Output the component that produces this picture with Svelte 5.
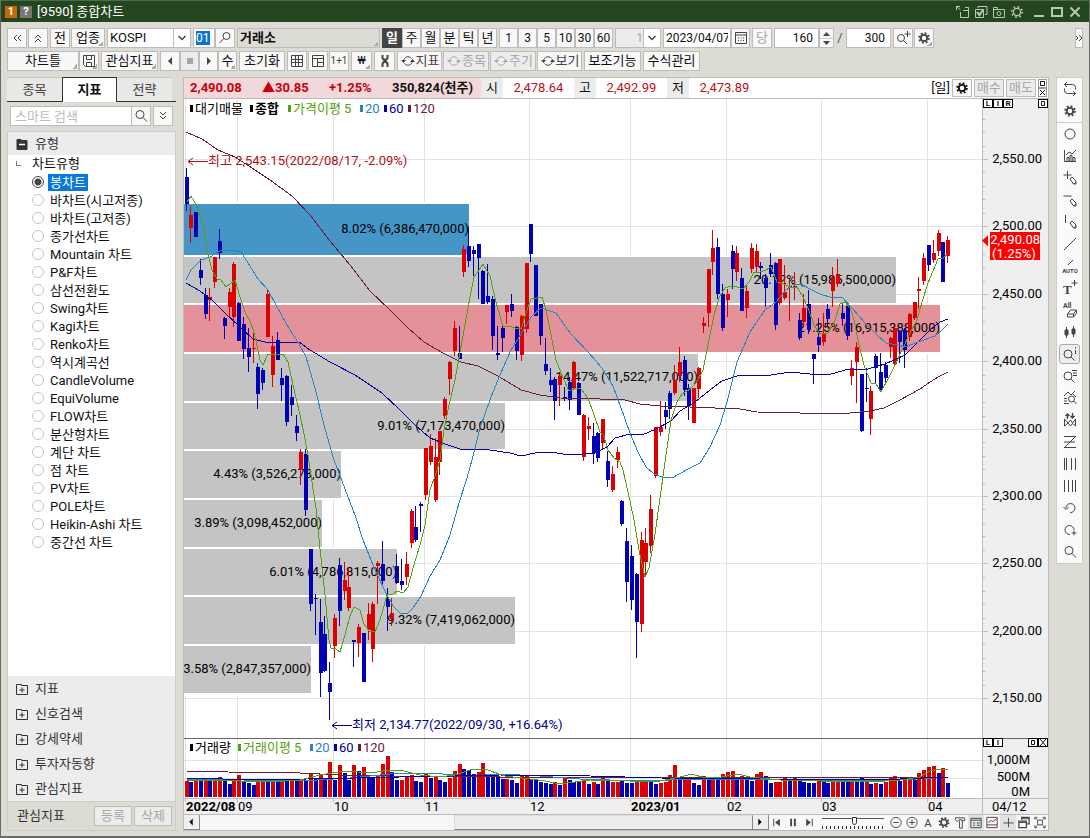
<script>
    const icons = {
        left2: '<path d="M8 5l-3 3 3 3M12 5l-3 3 3 3"/>',
        right2: '<path d="M4 5l3 3-3 3M8 5l3 3-3 3"/>',
        up2: '<path d="M5 8l3-3 3 3M5 12l3-3 3 3"/>',
        down2: '<path d="M5 4l3 3 3-3M5 8l3 3 3-3"/>',
        chevron: '<path d="M4.5 7l3.5 3.5L11.5 7" stroke-width="1.5"/>',
        search: '<circle cx="7" cy="6.5" r="4"/><path d="M10 9.5l4 4"/>',
        searchLeft: '<circle cx="9.5" cy="6" r="3.5"/><path d="M7 8.5L2.5 13"/>',
        searchPlus: '<circle cx="6" cy="8" r="3.5"/><path d="M8.5 10.5l3.5 3.5M12.5 1v6M9.5 4h6"/>',
        searchInfo: '<circle cx="6" cy="8" r="4"/><path d="M9 11l3.5 3.5M13.5 1v1.5M13.5 4v4"/>',
        searchList: '<circle cx="6" cy="8" r="4"/><path d="M9 11l3.5 3.5M10 2.5h5M11 5h4M11 7.5h4"/>',
        gear: '<circle cx="8" cy="8" r="3.2" stroke-width="1.8"/><circle cx="8" cy="8" r="4.9" stroke-width="1.8" stroke-dasharray="1.9 1.948"/>',
        gearThin: '<circle cx="8" cy="8" r="3.6" stroke-width="1.3"/><circle cx="8" cy="8" r="5.2" stroke-width="1.8" stroke-dasharray="1.6 2.484"/>',
        calendar: '<path d="M2.5 2.5h11v11h-11zM2.5 5h11"/><path d="M5 8h7M5 10.5h7" stroke-dasharray="1 1.5"/>',
        save: '<path d="M2.5 2.5h11v11h-9l-2-2zM5.5 2.5v4h5v-4M5.5 13.5v-4h5v4"/>',
        grid: '<path d="M2.5 2.5h11v11h-11zM2.5 6.5h11M2.5 9.5h11M6.5 2.5v11M9.5 2.5v11"/>',
        panes: '<path d="M2.5 2.5h11v11h-11zM2.5 5.5h11M7.5 5.5v8M7.5 9.5h6"/>',
        playLeft: '<path d="M10 4v8L6 8z" fill="currentColor" stroke="none"/>',
        playRight: '<path d="M6 4v8l4-4z" fill="currentColor" stroke="none"/>',
        stop: '<path d="M5 5h6v6H5z" fill="currentColor" stroke="none"/>',
        tools: '<path d="M5.5 2v3l5 5.5V14M10.5 2v3l-5 5.5V14" stroke-width="2"/>',
        cycle: '<path d="M3.5 8C4 3.5 9 2.5 11.500 5.5M12.5 8C12 12.500 7 13.5 4.5 10.5"/><path d="M1 7h5L3.5 10zM15 9h-5l2.5-3z" fill="currentColor" stroke="none"/>',
        repeat: '<path d="M5 1L2.5 3.5 5 6M2.5 3.5h8q3 0 3 3v2M11 15l2.5-2.5L11 10M13.5 12.5h-8q-3 0-3-3v-2"/>',
        circle: '<circle cx="8" cy="8" r="5"/>',
        chart: '<path d="M2.5 2v11.5H14M5 13V9.5h2V13M8 13V7.5h2V13M11 13V9.5h2V13M4 7l3-3 3 2 4-4"/>',
        pencilPlus: '<path d="M5.5 1v8M1.5 5h8M8 9l2-2 4 4v3h-2.5zM12 14l2-2"/>',
        pencilMinus: '<path d="M1.5 4h8M8 9l2-2 4 4v3h-2.5zM12 14l2-2"/>',
        pencilBar: '<path d="M3.5 1v8M8 9l2-2 4 4v3h-2.5zM12 14l2-2"/>',
        line: '<path d="M2 14L14 2"/>',
        auto: '<path d="M6 7l5-5"/><text x="8" y="15" font-size="6" font-weight="bold" text-anchor="middle" fill="currentColor" stroke="none">AUTO</text>',
        textPlus: '<text x="1" y="14" font-size="13" font-family="Liberation Serif, serif" font-weight="bold" fill="currentColor" stroke="none">T</text><path d="M12.5 0v6M9.5 3h6"/>',
        eraseAll: '<text x="1" y="6" font-size="7" font-weight="bold" fill="currentColor" stroke="none">All</text><path d="M5.5 12l3-4h6l-3 4zM5.5 12v3h6v-3M11.5 15l3-4V8"/>',
        candles: '<path d="M4.5 3v11M11.5 2v11"/><path d="M3 6h3v5H3zM10 5h3v5h-3z" fill="currentColor"/>',
        chartSearch: '<path d="M2 6l4-4 3 3 4-4M2 8.5h3M2 11h3M2 13.5h5"/><circle cx="9.5" cy="9" r="3"/><path d="M11.5 11l3 3M11 4l3 3"/>',
        arrows: '<path d="M5.5 7V2M3.5 4l2-2 2 2M10.5 1v5M8.5 4l2 2 2-2" stroke-width="1.4"/><path d="M2.5 14V7l3.5 4 2.5-3 2 3 3-4v7l-3-2.5-2 2.5-2.5-3z"/>',
        zed: '<path d="M2 2.5h12M2 8h11M2 13.5h12M13 3L3 13"/>',
        bars: '<path d="M2.5 2v12M4.5 2v12M9.5 2v12M13.5 2v12"/>',
        bars2: '<path d="M2.5 2v12M6.5 2v12M10.5 2v12M13.5 2v12"/>',
        undo: '<path d="M4 8a4.5 4.5 0 1 1 4 4.500M1.5 7L4 9.5 6.5 7"/>',
        redo: '<path d="M12 8a4.5 4.5 0 1 0-4 4.500M9.5 11h5M12 8.5v5"/>',
        first: '<path d="M4.5 4v8"/><path d="M11 4v8L6 8z" fill="currentColor" stroke="none"/>',
        pause: '<path d="M6 4v8M10 4v8" stroke-width="2"/>',
        last: '<path d="M11.5 4v8"/><path d="M5 4v8l5-4z" fill="currentColor" stroke="none"/>',
        minus: '<circle cx="8" cy="8" r="5.5"/><path d="M5 8h6"/>',
        plus: '<circle cx="8" cy="8" r="5.5"/><path d="M5 8h6M8 5v6"/>',
        letter: '<text x="8" y="13" font-size="12" text-anchor="middle" fill="currentColor" stroke="none">A</text>',
        hammer: '<path d="M3 3h10v3h-3v-1H7L5 7 3 5zM7.5 6v8h3V6"/>',
        form: '<path d="M2.5 3.5h11v10h-11zM2.5 5.5h11M5 8.5h2M5 11h2M9 8.5h3M9 11h3"/>',
        miniChart: '<path d="M2.5 2.5h11v11h-11zM2.5 10.5h11"/><path d="M4 8l3-2 2 1 4-3" stroke="#b02030"/>',
        cross: '<path d="M8.5 3v10M3 8.5h11"/>',
        windows: '<path d="M5.5 5V2.5h8v7H11M5.5 4h8M2.5 6.5h8v7h-8zM2.5 8h8" stroke-width="1.3"/>',
        expand: '<path d="M5.5 5.5h5v5h-5zM2.5 5V2.5H5M11 2.5h2.5V5M13.5 11v2.5H11M5 13.5H2.5V11M3 3l2 2M13 3l-2 2M3 13l2-2M13 13l-2-2"/>',
        popout: '<path d="M5.5 8v5.5h8v-10H10M8 6.5h5.5M1.5 2.5l4 3.5M1.5 6V2.5H5"/>',
        checks: '<path d="M5 4V2.5h9v8h-2M2.5 5.5h8v8h-8z"/><path d="M4 8l2.5 3L10 6" stroke-width="2"/>',
        camera: '<path d="M2.5 5.5v-2h4v2M2.5 5.5h11v8h-11z"/><circle cx="8" cy="9.5" r="2"/>',
        minimize: '<path d="M3 12h10" stroke-width="2"/>',
        maximize: '<path d="M3 4h10v8H3z" stroke-width="2"/>',
        close: '<path d="M3.5 3.5l9 9M12.5 3.5l-9 9" stroke-width="2"/>',
        folder: '<path d="M3 3.5h4l1 1h5v9H3z" fill="currentColor"/><path d="M5 8.5h6" stroke="#fff" stroke-width="1.5"/>',
        folderPlus: '<path d="M2.5 3.5h5v1h6v9h-11zM5.5 9h5M8 6.5v5"/>',
    }

    const titleTools = ["popout", "checks", "camera", "gearThin"]
    const periods = ["일", "주", "월", "분", "틱", "년"]
    const minutes = [1, 3, 5, 10, 30, 60]
    const types = [
        "봉차트", "바차트(시고저종)", "바차트(고저종)", "종가선차트", "Mountain 차트", "P&F차트", "삼선전환도",
        "Swing차트", "Kagi차트", "Renko차트", "역시계곡선", "CandleVolume", "EquiVolume", "FLOW차트",
        "분산형차트", "계단 차트", "점 차트", "PV차트", "POLE차트", "Heikin-Ashi 차트", "중간선 차트",
    ]
    const sections = ["지표", "신호검색", "강세약세", "투자자동향", "관심지표"]
    const drawTools = [
        "circle", "chart", "pencilPlus", "pencilMinus", "pencilBar", "line", "auto", "textPlus", "eraseAll", "candles",
        "searchInfo", "searchList", "chartSearch", "arrows", "zed", "bars", "bars2", "undo", "redo", "search",
    ]
    const footTools = ["minus", "plus", "letter", "gear", "hammer", "form", "miniChart", "cross", "windows", "expand"]

    let period = $state("일")
    let chartType = $state("봉차트")

    // volume profile: top, bottom, right edge, label, colour
    const bands = [
        [204, 255, 469, "8.02% (6,386,470,000)", "#4596c6"],
        [257, 303, 896, "20.12% (15,985,500,000)", "#c4c4c4"],
        [305, 352, 940, "21.25% (16,915,388,000)", "#e49199"],
        [354, 401, 698, "14.47% (11,522,717,000)", "#c4c4c4"],
        [403, 449, 505, "9.01% (7,173,470,000)", "#c4c4c4"],
        [451, 498, 341, "4.43% (3,526,273,000)", "#c4c4c4"],
        [500, 547, 322, "3.89% (3,098,452,000)", "#c4c4c4"],
        [549, 595, 397, "6.01% (4,786,815,000)", "#c4c4c4"],
        [597, 644, 515, "9.32% (7,419,062,000)", "#c4c4c4"],
        [646, 693, 311, "3.58% (2,847,357,000)", "#c4c4c4"],
    ]

    // colour, high, body top, body bottom, low
    const candles = `
        B168,177,204,211 R206,215,228,243 B212,212,237,237 B259,270,278,285 B288,295,314,319
        R288,297,300,321 R257,257,282,288 B229,241,253,259 B317,318,326,339 R288,292,307,317
        R262,264,317,327 B302,303,341,341 B317,324,349,359 B328,348,357,372 R333,348,349,363
        B363,367,394,409 B368,370,383,390 R289,294,337,337 R336,346,375,387 B332,340,360,360
        B368,378,385,401 B375,376,422,426 B385,397,405,416 B415,426,433,441 R449,452,470,485
        B449,454,510,516 B549,549,604,611 B594,598,599,635 B599,622,673,697 B616,634,671,672
        B662,683,692,720 R614,618,646,658 B558,565,611,626 R562,580,591,600 R569,587,608,611
        B640,640,642,667 R624,627,643,657 B633,633,682,682 R603,614,630,640 R602,604,649,662
        R561,563,566,604 B541,564,581,585 B588,599,607,631 R598,613,619,626 B554,566,583,584
        B559,581,585,590 R552,564,577,585 R509,511,543,548 B506,527,540,542 B502,504,506,532
        R448,448,495,500 R434,446,462,465 R438,457,500,502 R431,431,462,475 R397,399,416,419
        R361,362,379,395 R321,328,351,356 B326,353,359,359 R245,249,272,277 B227,246,261,267
        B246,250,254,276 B244,244,258,299 B270,271,304,304 B264,296,302,304 B296,299,336,350
        B326,353,355,360 B324,328,338,352 R305,305,312,324 B294,304,311,317 B326,327,351,360
        R315,316,355,361 R263,263,329,333 B224,224,254,262 B265,265,316,316 B304,304,336,345
        B338,364,371,375 B368,380,385,392 B377,379,401,420 R374,376,385,406 B387,397,399,401
        B377,382,400,410 R361,362,388,390 B382,383,415,415 R414,415,457,461 R417,426,429,440
        B423,436,453,464 B432,433,458,462 R419,419,443,449 B451,461,480,487 R466,474,490,492
        R447,452,460,468 B500,501,524,526 B528,541,582,602 B545,556,600,610 B573,574,622,658
        R532,540,624,632 R528,543,562,575 R495,509,546,553 R427,427,476,478 R401,427,432,436
        B402,410,417,429 B391,393,409,419 R365,380,393,395 R347,362,376,382 B356,360,390,396
        B384,388,406,420 R388,388,423,423 R367,368,389,398 R317,323,326,333 R269,269,313,327
        R230,248,262,275 B238,247,294,299 B284,294,328,331 R289,294,300,317 B245,251,269,289
        R246,253,272,281 B268,278,311,311 R285,291,308,318 R243,248,269,273 R244,251,267,272
        B262,266,268,279 B274,278,288,307 B253,265,274,277 B262,263,325,330 R259,259,303,305
        R265,292,298,300 R279,286,288,321 R272,286,287,300 B313,320,338,340 R294,308,322,325
        B290,304,330,334 B354,354,359,384 B318,337,345,352 R313,333,342,346 B304,309,319,326
        R267,277,291,307 R259,274,284,287 B304,313,319,326 B305,306,336,340 R360,368,376,385
        R342,347,362,403 B374,374,431,432 B368,388,389,402 R386,391,419,435 B354,356,368,384
        B353,372,390,392 B362,365,378,383 R337,338,347,358 R327,328,364,365 B330,331,342,363
        B328,330,350,368 R313,314,337,341 R302,302,318,320 R277,289,291,309 R253,258,281,285
        B245,245,265,271 R240,253,260,263 R230,233,251,256 B242,242,282,282 R236,240,256,263
    `.trim().split(/\s+/).map(t => [t[0], ...t.slice(1).split(",").map(Number)])

    // colour and height of each volume bar
    const volumes = `
        R16 B15 R18 B16 R17 B17 R17 R20 B18 B13 R17 R22 B15 B14 B12 R17 R17 B15 R18 B16 R17 B16
        R16 B16 R16 B16 R24 B18 R23 B19 R35 B17 R32 B24 B17 R32 B26 R30 B20 B19 R22 R33
        R41 B25 B17 R17 R20 R22 B16 B15 R24 B19 R20 B17 B15 R19 R26 R33 B28 B27 B23 R25
        R34 B22 B21 B20 B18 R18 B17 B14 R21 R22 B18 B18 B15 B14 B13 R15 B12 R19 B17 B15
        B15 R17 B13 R15 B13 R21 B16 R15 R15 B16 B14 B14 R15 R15 R17 B15 B13 R14 R15 R22
        R32 B20 R20 R20 B14 B12
        R21 B17 R17 B17 R23 R25 R26 B20 R21 B17 B16 R23 R25 B21 B14 R15 R15 R20 B17 R19
        B16 B15 B14 B14 R17 B17 B14 R16 R17 B17 B16 R17 B15 B19 R16 B13 R14 B13 R15 R20
        R21 B16 R18 R20 B17 R24 R27 R30 R31 B24 R29 B14
    `.trim().split(/\s+/).map(t => [t[0], Number(t.slice(1))])

    const averages = [
        ["#6b1a42", "186,132 202,139 218,150 235,157 252,168 270,180 292,196 310,215 330,241 350,265 370,291 390,310 408,328 424,342 443,353 461,362 478,366 498,376 521,390 540,395 560,398 600,399 625,400 640,404 660,406 690,407 715,408 740,409 757,412 800,413 820,414 850,413 870,411 884,408 900,400 920,389 930,382 940,376 948,372"],
        ["#0000a0", "186,283 200,291 213,301 225,313 240,327 253,339 265,342 299,342 310,350 330,362 355,375 382,393 400,410 415,425 430,438 445,444 460,449 490,450 510,453 521,456 535,453 550,452 570,455 595,453 607,447 615,438 630,434 642,435 656,429 671,421 680,411 695,402 710,390 722,381 740,375 765,376 790,372 810,374 828,375 845,370 868,369 885,364 905,355 915,345 930,330 940,322 948,319"],
        ["#2585c4", "186,280 191,270 201,260 210,257 220,251 232,250 241,252 250,266 258,279 268,290 277,307 290,330 299,344 306,357 315,388 324,425 334,460 345,489 355,515 363,540 375,570 387,595 393,606 400,613 407,614 413,608 421,596 430,576 440,560 450,535 459,503 467,478 472,460 480,428 491,397 500,375 511,350 521,334 531,317 541,308 556,313 570,333 589,353 602,368 613,386 621,408 630,433 638,452 646,467 654,474 662,477 672,478 690,468 700,463 710,447 720,425 727,402 737,362 750,332 765,310 776,302 784,292 792,285 801,284 810,289 820,294 833,298 842,297 852,308 865,323 877,335 886,343 898,345 905,347 918,342 935,336 942,330 948,324"],
        ["#55a010", "187,202 191,196 197,206 203,225 207,250 212,270 217,279 221,280 226,287 235,280 240,297 245,312 250,321 254,332 260,360 263,365 268,354 283,354 288,362 293,385 300,415 304,434 308,455 312,482 316,508 320,549 325,595 329,640 331,648 336,649 340,652 345,635 350,616 354,607 360,610 364,624 369,631 375,632 380,620 387,595 393,594 397,591 403,593 408,587 413,568 420,545 425,525 430,490 436,473 440,460 444,430 449,405 455,380 460,352 465,325 470,297 474,277 479,270 483,264 490,276 496,302 503,326 509,326 515,328 521,329 527,310 531,299 537,298 542,297 546,310 551,335 556,360 563,378 569,391 575,388 581,389 588,398 594,415 600,432 604,436 608,450 614,458 620,462 623,470 628,492 634,520 639,550 645,577 649,568 655,534 660,498 666,455 671,420 677,402 682,394 690,389 696,383 703,370 709,340 714,315 719,298 725,288 731,286 737,287 743,289 749,282 754,272 760,272 766,270 771,267 777,282 784,284 790,287 797,287 802,295 808,308 814,325 820,334 828,333 835,320 840,304 845,302 850,308 854,320 859,345 864,365 871,383 876,384 881,392 889,377 896,363 903,348 910,333 917,320 922,302 928,283 933,271 938,259 943,258 947,255"],
    ]
    const volumeAverages = [
        ["#6b1a42", "186,771 228,772 300,773 340,775 390,776 500,777 700,778 948,777"],
        ["#2585c4", "186,779 300,781 350,778 400,773 430,773 470,776 500,774 540,776 580,779 640,781 700,779 800,780 900,780 948,777"],
        ["#0000a0", "186,778 260,780 400,777 500,775 590,776 660,778 770,779 900,779 948,777"],
        ["#55a010", "186,780 240,781 270,782 300,780 320,775 345,771 370,773 390,770 400,770 420,775 440,777 455,775 470,770 485,769 505,776 530,779 545,781 560,784 590,780 630,781 660,781 680,777 692,774 705,778 722,777 738,774 750,777 780,780 820,781 870,782 900,780 920,777 930,771 940,769 948,769"],
    ]

    const months = [
        [185, "2022/08", true], [237, "09"], [333, "10"], [424, "11"], [529, "12"],
        [630, "2023/01", true], [726, "02"], [821, "03"], [927, "04"],
    ]
    const prices = [
        [159, "2,550.00"], [226, "2,500.00"], [294, "2,450.00"], [361, "2,400.00"], [429, "2,350.00"],
        [496, "2,300.00"], [563, "2,250.00"], [631, "2,200.00"], [698, "2,150.00"],
    ]
    const priceLegend = [
        [190, "대기매물", "#000"], [250, "종합", "#000", true], [288, "가격이평 5", "#55a010"],
        [360, "20", "#2585c4"], [384, "60", "#0000a0"], [408, "120", "#6b1a42"],
    ]
    const volumeLegend = [
        [190, "거래량", "#000"], [238, "거래이평 5", "#55a010"],
        [310, "20", "#2585c4"], [334, "60", "#0000a0"], [358, "120", "#6b1a42"],
    ]

    const fill = c => c === "R" ? "#dc0000" : "#0000b4"
    const x = i => Math.round(184.5 + i * 4.79)
</script>

{#snippet icon(name)}
    <svg class="icon" viewBox="0 0 16 16" aria-hidden="true">{@html icons[name]}</svg>
{/snippet}

{#snippet legend(items, y)}
    {#each items as [lx, label, color, bold]}
        <rect x={lx} y={y - 8} width="3" height="7" fill={color} />
        <text x={lx + 5} {y} fill={color} class:bold>{label}</text>
    {/each}
{/snippet}

<div class="window">
    <header class="title">
        <span class="badge">1</span>
        <span class="badge help">?</span>
        <h1>[9590] 종합차트</h1>
        <div class="title-tools">
            {#each titleTools as name}
                <button aria-label={name}>{@render icon(name)}</button>
            {/each}
        </div>
        <div class="title-tools controls">
            {#each ["minimize", "maximize", "close"] as name}
                <button aria-label={name}>{@render icon(name)}</button>
            {/each}
        </div>
    </header>

    <div class="toolbars">
        <div class="toolbar">
            <div class="pair">
                <button class="btn w20" aria-label="이전">{@render icon("left2")}</button>
                <button class="btn w20" aria-label="접기">{@render icon("up2")}</button>
            </div>
            <div class="pair">
                <button class="btn w20">전</button>
                <button class="btn w34 corner">업종</button>
            </div>
            <div class="select w84">
                <select aria-label="업종"><option>KOSPI</option></select>
                <span class="arrow">{@render icon("chevron")}</span>
            </div>
            <div class="seg">
                <input class="field code w22" aria-label="코드" value="01">
                <button class="btn w20" aria-label="찾기">{@render icon("searchLeft")}</button>
            </div>
            <div class="name corner">거래소</div>
            <div class="seg">
                {#each periods as p}
                    <button class="btn w19 period" class:active={period === p} onclick={() => period = p}>{p}</button>
                {/each}
            </div>
            <div class="seg">
                {#each minutes as m}
                    <button class="btn w19 minute">{m}</button>
                {/each}
            </div>
            <div class="select w46 off">
                <select aria-label="분"><option>1</option></select>
                <span class="arrow">{@render icon("chevron")}</span>
            </div>
            <div class="seg">
                <input class="field w68" aria-label="날짜" value="2023/04/07">
                <button class="btn w19" aria-label="달력">{@render icon("calendar")}</button>
            </div>
            <button class="btn w20 muted">당</button>
            <div class="seg">
                <input class="field num w45" aria-label="표시 개수" value="160">
                <div class="spin">
                    <button aria-label="증가"><svg viewBox="0 0 7 4"><path d="M0 4l3.5-4L7 4z" /></svg></button>
                    <button aria-label="감소"><svg viewBox="0 0 7 4"><path d="M0 0l3.5 4L7 0z" /></svg></button>
                </div>
            </div>
            <span class="slash">/</span>
            <input class="field num w45" aria-label="전체 개수" value="300">
            <div class="pair">
                <button class="btn w20" aria-label="확대">{@render icon("searchPlus")}</button>
                <button class="btn w20 corner" aria-label="설정">{@render icon("gear")}</button>
            </div>
            <button class="btn more" aria-label="더보기">{@render icon("right2")}</button>
        </div>

        <div class="toolbar">
            <div class="seg">
                <button class="btn w72 corner">차트틀</button>
                <button class="btn w20 corner" aria-label="저장">{@render icon("save")}</button>
            </div>
            <button class="btn w57 corner">관심지표</button>
            <div class="seg">
                <button class="btn w20" aria-label="뒤로">{@render icon("playLeft")}</button>
                <button class="btn w19 muted shade" aria-label="정지">{@render icon("stop")}</button>
                <button class="btn w19" aria-label="앞으로">{@render icon("playRight")}</button>
                <button class="btn w19 corner">수</button>
            </div>
            <button class="btn w46">초기화</button>
            <div class="pair">
                <button class="btn w20" aria-label="격자">{@render icon("grid")}</button>
                <button class="btn w20" aria-label="분할">{@render icon("panes")}</button>
                <button class="btn w20 tiny">1+1</button>
            </div>
            <button class="btn w21 corner won">₩</button>
            <button class="btn w21" aria-label="도구">{@render icon("tools")}</button>
            <div class="pair">
                <button class="btn w45 soft">{@render icon("cycle")}지표</button>
                <button class="btn w46 muted shade">{@render icon("cycle")}종목</button>
                <button class="btn w46 muted shade">{@render icon("cycle")}주기</button>
                <button class="btn w45 soft">{@render icon("cycle")}보기</button>
            </div>
            <button class="btn w57">보조기능</button>
            <button class="btn w57">수식관리</button>
        </div>
    </div>

    <main class="body">
        <aside class="sidebar">
            <nav class="tabs">
                <button>종목</button>
                <button class="current">지표</button>
                <button>전략</button>
            </nav>
            <div class="search">
                <input class="field" aria-label="스마트 검색" placeholder="스마트 검색">
                <button class="btn w20" aria-label="검색">{@render icon("search")}</button>
                <button class="btn w20 apart" aria-label="펼치기">{@render icon("down2")}</button>
            </div>
            <h2 class="section top">{@render icon("folder")}유형</h2>
            <fieldset class="types">
                <legend>차트유형</legend>
                {#each types as type}
                    <label class="type">
                        <input type="radio" name="type" value={type} bind:group={chartType}>
                        <span>{type}</span>
                    </label>
                {/each}
            </fieldset>
            {#each sections as section}
                <button class="section">{@render icon("folderPlus")}{section}</button>
            {/each}
            <div class="saved">
                <span>관심지표</span>
                <button class="btn muted shade">등록</button>
                <button class="btn muted shade">삭제</button>
            </div>
        </aside>

        <section class="main">
            <div class="quote">
                <div class="change">
                    <b>2,490.08</b><b>▲30.85</b><b>+1.25%</b><b class="amount">350,824(천주)</b>
                </div>
                <span class="key">시</span><span class="val">2,478.64</span>
                <span class="key">고</span><span class="val">2,492.99</span>
                <span class="key">저</span><span class="val">2,473.89</span>
                <span class="unit">[일]</span>
                <button class="btn w20" aria-label="설정">{@render icon("gear")}</button>
                <button class="btn w30 muted shade">매수</button>
                <button class="btn w30 muted shade">매도</button>
                <div class="mini">
                    <button aria-label="복원"><svg viewBox="0 0 7 7"><path d="M1.5 1.5h4v4h-4z" /></svg></button>
                    <button aria-label="닫기"><svg viewBox="0 0 7 7"><path d="M1 1l5 5M6 1L1 6" /></svg></button>
                </div>
            </div>

            <div class="pane">
                <svg class="plot" viewBox="184 99 864 639">
                    <rect x="184" y="99" width="799" height="639" fill="#fff" />
                    <g class="crisp">
                        {#each months as [mx]}
                            <path d="M{mx}.5 99V738" stroke="#e2e2e2" />
                        {/each}
                        {#each prices as [py]}
                            <path d="M184 {py}.5H983" stroke="#e2e2e2" />
                        {/each}
                        {#each bands as [top, bottom, right, , color]}
                            <rect x="184" y={top - 2} width={right - 184} height={bottom - top + 4} fill="#fff" />
                            <rect x="184" y={top} width={right - 184} height={bottom - top} fill={color} />
                        {/each}
                    </g>
                    {#each bands as [top, bottom, right, label]}
                        <text x={right} y={Math.floor((top + bottom) / 2) + 4} text-anchor="end">{label}</text>
                    {/each}
                    <g class="crisp">
                        {#each candles as [c, high, top, bottom, low], i}
                            <rect x={x(i) + 1} y={high} width="1" height={low - high} fill={fill(c)} />
                            <rect x={x(i)} y={top} width="4" height={Math.max(bottom - top, 1)} fill={fill(c)} />
                        {/each}
                        {#each averages as [color, points]}
                            <polyline {points} stroke={color} fill="none" />
                        {/each}
                    </g>
                    <path d="M208 161.5H188M193 158l-5 3.5 5 3.5" stroke="#b01020" fill="none" />
                    <text x="208" y="165" fill="#b01020">최고 2,543.15(2022/08/17, -2.09%)</text>
                    <path d="M352 725.5H332M337 722l-5 3.5 5 3.5" stroke="#00008c" fill="none" />
                    <text x="352" y="729" fill="#00008c">최저 2,134.77(2022/09/30, +16.64%)</text>
                    {@render legend(priceLegend, 113)}

                    <rect x="983" y="99" width="65" height="639" fill="#efefef" />
                    <g class="crisp">
                        <path d="M982.5 99V738" stroke="#bbb" />
                        {#each prices as [py]}
                            <path d="M983 {py}.5h5M983 {py - 54}.5h2M983 {py - 40}.5h2M983 {py - 27}.5h2M983 {py - 13}.5h2" stroke="#bbb" />
                        {/each}
                    </g>
                    {#each prices as [py, label]}
                        <text x="1042" y={py + 4} text-anchor="end">{label}</text>
                    {/each}
                    <path d="M982 240.5l6-5v11z" fill="#f00" />
                    <rect x="990" y="232" width="50" height="28" fill="#f00" />
                    <text x="1040" y="244" text-anchor="end" fill="#fff">2,490.08</text>
                    <text x="992" y="258" fill="#fff">(1.25%)</text>
                </svg>
                <div class="marks">
                    <button>L</button><button>I</button><button>R</button>
                    <button class="end" aria-label="최대화"><svg viewBox="0 0 8 7"><path d="M2.5 1.5h3v4h-3z" /></svg></button>
                </div>
            </div>

            <div class="pane">
                <svg class="plot" viewBox="184 738 864 60">
                    <rect x="184" y="738" width="799" height="60" fill="#fff" />
                    <rect x="983" y="738" width="65" height="60" fill="#efefef" />
                    <g class="crisp">
                        {#each months as [mx]}
                            <path d="M{mx}.5 738V798" stroke="#e2e2e2" />
                        {/each}
                        <path d="M184 760.5H987M184 778.5H987" stroke="#e2e2e2" />
                        <path d="M982.5 738V798" stroke="#bbb" />
                        <path d="M184 738.5H1048" stroke="#666" />
                        {#each volumes as [c, h], i}
                            <rect x={x(i)} y={797 - h} width="4" height={h} fill={fill(c)} />
                        {/each}
                        {#each volumeAverages as [color, points]}
                            <polyline {points} stroke={color} fill="none" />
                        {/each}
                    </g>
                    {@render legend(volumeLegend, 752)}
                    <text x="1030" y="764" text-anchor="end">1,000M</text>
                    <text x="1030" y="781" text-anchor="end">500M</text>
                    <text x="1030" y="796" text-anchor="end">0M</text>
                </svg>
                <div class="marks">
                    <button>L</button><button>I</button>
                    <button class="end" aria-label="최대화"><svg viewBox="0 0 8 7"><path d="M2.5 1.5h3v4h-3z" /></svg></button>
                    <button aria-label="닫기"><svg viewBox="0 0 8 7"><path d="M1 0l6 7M7 0L1 7" /></svg></button>
                </div>
            </div>

            <svg class="plot dates" viewBox="184 798 864 17">
                <path d="M184 798.5H1048M184 814.5H1048M982.5 798V815" stroke="#bbb" />
                {#each months as [mx, label, bold]}
                    <path d="M{mx}.5 798v4" stroke="#bbb" />
                    <text x={mx + 1} y="811" class:bold>{label}</text>
                {/each}
                <text x="992" y="811">04/12</text>
            </svg>

            <div class="foot">
                <div class="scroll">
                    <button aria-label="왼쪽">{@render icon("playLeft")}</button>
                    <div class="track"></div>
                    <div class="thumb"></div>
                    <button aria-label="오른쪽">{@render icon("playRight")}</button>
                </div>
                <div class="foot-tools">
                    {#each ["first", "pause", "last"] as name}
                        <button aria-label={name}>{@render icon(name)}</button>
                    {/each}
                    <input type="range" aria-label="재생 속도" min="0" max="100" value="52">
                    {#each footTools as name}
                        <button aria-label={name} class:framed={name === "form" || name === "cross"}>{@render icon(name)}</button>
                    {/each}
                </div>
            </div>
        </section>

        <div class="tools">
            <button aria-label="repeat">{@render icon("repeat")}</button>
            <button aria-label="gear">{@render icon("gear")}</button>
            <hr>
            {#each drawTools as name}
                <button aria-label={name} class:pressed={name === "searchInfo"}>{@render icon(name)}</button>
            {/each}
        </div>
    </main>
</div>

<style>
    :global(body) {
        background: #dcdcd5;
    }

    .window {
        box-sizing: border-box;
        min-height: 100vh;
        display: flex;
        flex-direction: column;
        background: #dcdcd5;
        border: 1px solid #6a6a66;
        border-width: 0 1px 2px;
        font: 13px/16px Roboto, "Noto Sans CJK KR", sans-serif;
        color: #111;
    }

    .window *,
    .window *::before {
        box-sizing: border-box;
    }

    button,
    input,
    select {
        margin: 0;
        padding: 0;
        font: inherit;
        color: inherit;
        border: 0;
        border-radius: 0;
        background: none;
        outline: none;
    }

    .icon {
        display: block;
        flex: none;
        width: 16px;
        height: 16px;
        fill: none;
        stroke: currentColor;
    }

    .title {
        display: flex;
        align-items: center;
        height: 22px;
        padding: 0 6px 0 4px;
        background: #24461f;
        border-top: 1px solid #4d6b49;
        color: #fff;
    }

    .badge {
        width: 12px;
        height: 12px;
        margin-right: 3px;
        background: #c56a08;
        font-size: 11px;
        line-height: 12px;
        font-weight: 700;
        text-align: center;
    }

    .help {
        background: #777;
        margin-right: 5px;
    }

    h1 {
        margin: 0;
        font-size: 13px;
        font-weight: 400;
    }

    .title-tools {
        display: flex;
        gap: 2px;
        margin-left: auto;
        color: #b9c6b5;
    }

    .controls {
        margin-left: 6px;
    }

    .toolbars {
        display: flex;
        flex-direction: column;
        gap: 3px;
        padding: 6px;
    }

    .toolbar {
        display: flex;
        gap: 2px;
        height: 20px;
    }

    .toolbar .icon {
        color: #444;
    }

    .pair,
    .seg {
        display: flex;
        gap: 1px;
    }

    .seg {
        gap: 0;
    }

    .seg > * + * {
        border-left: 0;
    }

    .btn {
        display: flex;
        align-items: center;
        justify-content: center;
        height: 20px;
        border: 1px solid #bcbcb8;
        background-color: #f8f8f8;
        white-space: nowrap;
        overflow: hidden;
    }

    .w19 { width: 19px; }
    .w20 { width: 20px; }
    .w21 { width: 21px; }
    .w22 { width: 22px; }
    .w30 { width: 30px; }
    .w34 { width: 34px; }
    .w45 { width: 45px; }
    .w46 { width: 46px; }
    .w57 { width: 57px; }
    .w68 { width: 68px; }
    .w72 { width: 72px; }
    .w84 { width: 84px; }

    .muted,
    .toolbar .muted .icon {
        color: #a5a5a5;
    }

    .shade {
        background-color: #ececec;
    }

    .soft {
        color: #444;
    }

    .tiny {
        font-size: 10px;
        color: #444;
    }

    .won {
        font-size: 11px;
    }

    .minute {
        font-size: 12px;
    }

    .corner {
        background-image: linear-gradient(135deg, transparent 50%, #aaa 50%);
        background-size: 5px 5px;
        background-position: right 1px bottom 1px;
        background-repeat: no-repeat;
    }

    .period:first-child {
        width: 20px;
    }

    .active {
        background: #444;
        border-color: #444;
        color: #fff;
        font-weight: 700;
    }

    .field {
        height: 20px;
        border: 1px solid #bcbcb8;
        background: #fff;
        padding: 0 2px;
        font-size: 12px;
    }

    .code {
        color: #fff;
        background: linear-gradient(#0a74d0, #0a74d0) 2px 2px / 14px 14px no-repeat #fff;
    }

    .num {
        text-align: right;
        padding-right: 5px;
    }

    .select {
        position: relative;
        border: 1px solid #bcbcb8;
        background: #fff;
    }

    .select select {
        appearance: none;
        width: 100%;
        height: 18px;
        padding-left: 2px;
    }

    .off select {
        padding-left: 20px;
        color: #aaa;
        background: #ececec;
    }

    .arrow {
        position: absolute;
        top: 0;
        right: 0;
        width: 17px;
        height: 18px;
        border-left: 1px solid #bcbcb8;
        background: #fff;
        pointer-events: none;
    }

    .name {
        width: 143px;
        border: 1px solid #bcbcb8;
        padding: 1px 2px;
        font-weight: 700;
    }

    .spin {
        display: flex;
        flex-direction: column;
        width: 15px;
        border: 1px solid #bcbcb8;
        background: #f8f8f8;
    }

    .spin button {
        display: flex;
        align-items: center;
        justify-content: center;
        height: 9px;
    }

    .spin button + button {
        border-top: 1px solid #ccc;
    }

    .spin svg {
        width: 7px;
        height: 4px;
        fill: #444;
    }

    .slash {
        width: 8px;
        line-height: 20px;
        text-align: center;
        color: #555;
    }

    .more {
        width: 8px;
        margin-left: auto;
    }

    .body {
        flex: 1;
        display: flex;
        align-items: flex-start;
        gap: 7px;
        padding: 0 6px 5px;
    }

    .sidebar {
        display: flex;
        flex-direction: column;
        align-self: stretch;
        flex: none;
        width: 169px;
    }

    .tabs {
        display: flex;
        height: 25px;
        border-bottom: 1px solid #333;
    }

    .tabs button {
        width: 55px;
        height: 24px;
        border-top: 1px solid #c4c4c0;
        background: #e8e8e6;
        color: #444;
    }

    .tabs .current {
        height: 25px;
        border: 1px solid #333;
        border-bottom: 0;
        background: #fff;
        color: #111;
        font-weight: 700;
    }

    .search {
        display: flex;
        padding: 4px 3px 5px;
        color: #444;
    }

    .search .field {
        flex: 1;
        min-width: 0;
        border-right: 0;
        padding-left: 4px;
        font-size: 13px;
    }

    .search .field::placeholder {
        color: #bbb;
    }

    .apart {
        margin-left: 2px;
    }

    .section {
        display: flex;
        align-items: center;
        gap: 5px;
        height: 25px;
        margin: 0;
        padding-left: 6px;
        border: 1px solid #ccccc8;
        border-width: 0 1px;
        background: #ececec;
        color: #333;
        font-size: 13px;
        font-weight: 400;
    }

    .top {
        height: 24px;
        border-top-width: 1px;
    }

    .types {
        flex: 1;
        margin: 0;
        min-width: 0;
        padding: 0 0 0 24px;
        border: 1px solid #ccccc8;
        border-width: 0 1px;
        background: #fff;
    }

    .types legend {
        float: left;
        width: 100%;
        height: 18px;
        padding: 0;
        line-height: 18px;
    }

    .types legend::before {
        content: "";
        float: left;
        width: 5px;
        height: 5px;
        margin: 6px 0 0 -16px;
        border: 1px solid #777;
        border-width: 0 0 1px 1px;
    }

    .type {
        clear: both;
        display: flex;
        align-items: center;
        gap: 4px;
        height: 18px;
    }

    .type input {
        appearance: none;
        width: 12px;
        height: 12px;
        border: 1px solid #c4c4c4;
        border-radius: 50%;
        background: #fff;
    }

    .type input:checked {
        border-color: #444;
        background: radial-gradient(circle, #444 3px, #fff 4px);
    }

    .type span {
        padding: 0 2px;
        line-height: 17px;
    }

    .type input:checked + span {
        background: #0a78d6;
        color: #fff;
    }

    .saved {
        display: flex;
        align-items: center;
        gap: 2px;
        height: 30px;
        padding: 0 3px 0 9px;
        border: 1px solid #ccccc8;
        color: #333;
    }

    .saved span {
        flex: 1;
    }

    .saved .btn {
        width: 38px;
    }

    .main {
        flex: 1;
        min-width: 0;
        border: 1px solid #bcbcb8;
        background: #fff;
    }

    .quote {
        display: flex;
        height: 21px;
        border-bottom: 1px solid #bcbcb8;
        line-height: 20px;
    }

    .change {
        display: flex;
        justify-content: space-between;
        width: 297px;
        padding: 0 8px 0 6px;
        background: #f2d8da;
        color: #c8000c;
    }

    .amount {
        color: #111;
    }

    .key {
        width: 22px;
        background: #ececec;
        text-align: center;
    }

    .val {
        width: 71px;
        text-align: center;
        color: #b8101c;
    }

    .unit {
        margin-left: auto;
        padding-right: 2px;
    }

    .quote .btn {
        height: 18px;
        margin: 1px 2px 0 0;
    }

    .mini {
        width: 10px;
        margin: 1px 0;
    }

    .mini button {
        display: block;
        width: 9px;
        height: 9px;
        border: 1px solid #999;
    }

    .mini svg,
    .marks svg {
        display: block;
        width: 100%;
        height: 100%;
        fill: none;
        stroke: #111;
    }

    .pane {
        position: relative;
    }

    .plot {
        display: block;
        width: 100%;
        height: auto;
    }

    .plot .bold {
        font-weight: 700;
    }

    .crisp {
        shape-rendering: crispEdges;
    }

    .dates {
        background: #efefef;
    }

    .marks {
        position: absolute;
        top: 0;
        right: 0;
        display: flex;
        width: 65px;
    }

    .marks button {
        width: 10px;
        height: 9px;
        border: 1px solid #000;
        background: #fff;
        font-size: 8px;
        line-height: 7px;
        font-weight: 700;
    }

    .marks .end {
        margin-left: auto;
    }

    .foot {
        display: flex;
        height: 15px;
        background: #f8f8f8;
    }

    .scroll {
        flex: 1;
        display: flex;
    }

    .scroll button {
        width: 16px;
        border: 1px solid #888;
        border-width: 0 1px 1px 0;
        background: #efefef;
    }

    .scroll .icon {
        height: 14px;
        width: 14px;
    }

    .track {
        flex: 255;
        background: #f6f6f6;
    }

    .thumb {
        flex: 298;
        border: 1px solid #888;
        border-top-color: #ddd;
        border-left-color: #ddd;
        background: #ececec;
    }

    .foot-tools {
        display: flex;
        align-items: center;
        color: #444;
    }

    .foot-tools button {
        width: 16px;
        height: 15px;
    }

    .foot-tools .icon {
        height: 15px;
    }

    .framed {
        background: #e2e2e2;
    }

    .foot-tools input {
        appearance: none;
        width: 62px;
        height: 15px;
        margin: 0 4px 0 5px;
        background:
            linear-gradient(#555, #555) 0 3px / 100% 1px no-repeat,
            repeating-linear-gradient(90deg, #333 0 1px, transparent 1px 4px) 0 11px / 100% 3px no-repeat;
    }

    .foot-tools input::-webkit-slider-thumb {
        appearance: none;
        width: 5px;
        height: 8px;
        margin-top: -3px;
        border: 1px solid #333;
        border-radius: 0 0 3px 3px;
        background: #fff;
    }

    .tools {
        flex: none;
        width: 27px;
        border: 1px solid #ccccc8;
        background: #fafafa;
        color: #444;
    }

    .tools button {
        display: flex;
        align-items: center;
        justify-content: center;
        width: 21px;
        height: 20px;
        margin: 1px 2px;
        border: 1px solid transparent;
        border-radius: 3px;
    }

    .tools button + button {
        margin-top: 2px;
    }

    .tools .pressed {
        border-color: #aaa;
        background: #eee;
    }

    .tools hr {
        margin: 0;
        border: 0;
        border-top: 1px solid #ccc;
    }
</style>
